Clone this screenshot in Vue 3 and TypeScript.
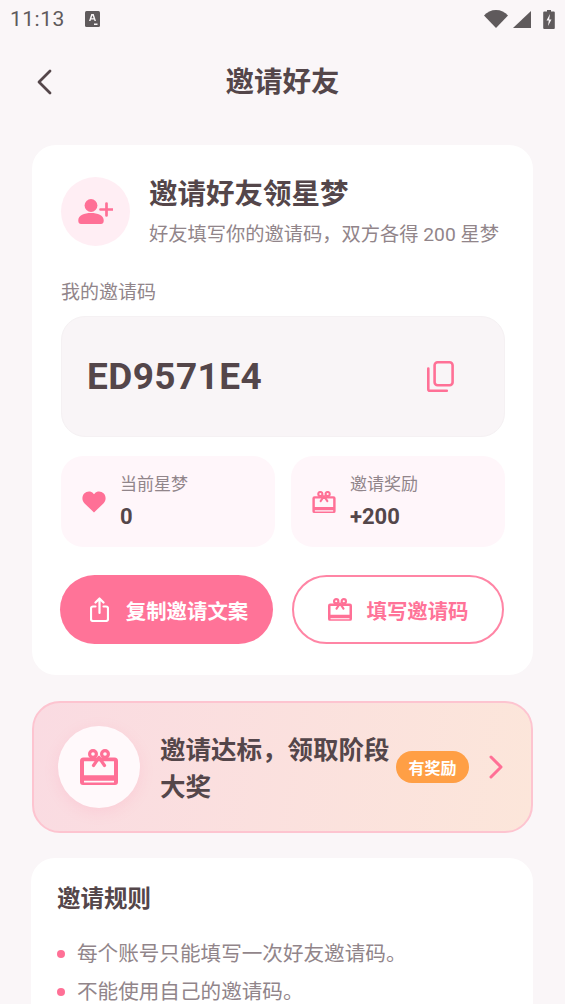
<script setup lang="ts">
const rules: string[] = ['每个账号只能填写一次好友邀请码。', '不能使用自己的邀请码。']
const giftBody =
  'M3.500 8.500h31a3.500 3.500 0 0 1 3.500 3.500V33a3 3 0 0 1-3 3H3a3 3 0 0 1-3-3V12a3.500 3.500 0 0 1 3.500-3.500zM4 12.300v14h30v-14zM4 31.700v1.300a.5.500 0 0 0 .5.500h29a.5.500 0 0 0 .5-.5v-1.300z'
</script>

<template>
  <div class="page">
    <div class="status">
      <span class="time">11:13</span>
      <svg class="a-icon" viewBox="0 0 15 16"><rect width="15" height="16" rx="1.500" fill="#5f5a5c"/><path fill="#faf6f8" d="M6.300 3h2.400l2.300 7H9.500L9 8.500H6L5.500 10H4zM6.400 7.300h2.200L7.500 4.200zM9 12.500h3.500V14H9z"/></svg>
      <span class="grow"></span>
      <svg class="wifi" viewBox="0 0 24 18"><path fill="#5f5a5c" d="M0 5.500C3 2 7.300 0 12 0s9 2 12 5.500L12 18z"/></svg>
      <svg class="signal" viewBox="0 0 18 17"><path fill="#5f5a5c" d="M18 0v17H0z"/></svg>
      <svg class="batt" viewBox="0 0 12 19"><path fill="#5f5a5c" d="M4 0h4v1.500h2.800a1 1 0 0 1 1 1V18a1 1 0 0 1-1 1H1.200a1 1 0 0 1-1-1V2.500a1 1 0 0 1 1-1H4z"/><path fill="#faf6f8" d="M7 4 3.500 10.500h2.300L5 16l3.500-6.500H6.200z"/></svg>
    </div>

    <div class="nav">
      <svg class="back" viewBox="0 0 16 26"><path d="M14 2 3 13l11 11" fill="none" stroke="#54464a" stroke-width="2.800" stroke-linecap="round" stroke-linejoin="round"/></svg>
      <span class="nav-title">邀请好友</span>
    </div>

    <section class="card main">
      <div class="head">
        <div class="avatar">
          <svg viewBox="0 0 35 25" class="avatar-svg"><circle cx="13" cy="6.500" r="6.400" fill="#ff7096"/><path fill="#ff7096" d="M.3 21c0-4.500 6-7 12.700-7s12.700 2.500 12.700 7v1c0 2-1.200 3-2.700 3H3c-1.500 0-2.700-1-2.700-3z"/><path d="M28.500 4.500v12M22.500 10.500h12" stroke="#ff7096" stroke-width="2.700" fill="none" stroke-linecap="round"/></svg>
        </div>
        <div class="head-text">
          <div class="head-title">邀请好友领星梦</div>
          <div class="head-sub">好友填写你的邀请码，双方各得 200 星梦</div>
        </div>
      </div>

      <div class="label">我的邀请码</div>
      <div class="code-box">
        <span class="code">ED9571E4</span>
        <svg class="copy" viewBox="0 0 27 31"><rect x="7.600" y="1.300" width="18" height="23" rx="3" fill="none" stroke="#ff7096" stroke-width="2.600"/><path d="M1.300 7.500v20.700a1.500 1.500 0 0 0 1.500 1.500h17" fill="none" stroke="#ff7096" stroke-width="2.600" stroke-linecap="round"/></svg>
      </div>

      <div class="stats">
        <div class="stat">
          <svg class="stat-icon" viewBox="0 0 24 22"><path fill="#ff7096" d="M12 21.500 2.600 12.400C-.2 9.700-.3 5.300 2.200 2.600 4.800-.1 9-.1 11.300 2.400l.7.800.7-.8c2.300-2.500 6.500-2.500 9.100.2 2.500 2.700 2.400 7.100-.4 9.800z"/></svg>
          <div>
            <div class="stat-label">当前星梦</div>
            <div class="stat-value">0</div>
          </div>
        </div>
        <div class="stat">
          <svg class="stat-icon" viewBox="0 0 38 36"><path fill="#ff7096" fill-rule="evenodd" :d="giftBody"/><g fill="none" stroke="#ff7096" stroke-width="3.400"><circle cx="13" cy="5" r="3.400"/><circle cx="25" cy="5" r="3.400"/><path d="M19 8.500l-5.500 8M19 8.500l5.500 8" stroke-linecap="round"/></g></svg>
          <div>
            <div class="stat-label">邀请奖励</div>
            <div class="stat-value">+200</div>
          </div>
        </div>
      </div>

      <div class="actions">
        <button class="btn primary">
          <svg class="share" viewBox="0 0 19 25"><path d="M5.500 9.500H3a2 2 0 0 0-2 2V22a2 2 0 0 0 2 2h13a2 2 0 0 0 2-2V11.500a2 2 0 0 0-2-2h-2.500M9.500 16V2M5.500 5.500l4-4 4 4" fill="none" stroke="#fff" stroke-width="2.200" stroke-linecap="round" stroke-linejoin="round"/></svg>
          <span>复制邀请文案</span>
        </button>
        <button class="btn outline">
          <svg class="btn-gift" viewBox="0 0 38 36"><path fill="#ff7096" fill-rule="evenodd" :d="giftBody"/><g fill="none" stroke="#ff7096" stroke-width="3.400"><circle cx="13" cy="5" r="3.400"/><circle cx="25" cy="5" r="3.400"/><path d="M19 8.500l-5.500 8M19 8.500l5.500 8" stroke-linecap="round"/></g></svg>
          <span>填写邀请码</span>
        </button>
      </div>
    </section>

    <section class="banner">
      <div class="banner-circle">
        <svg class="banner-gift" viewBox="0 0 38 36"><path fill="#ff7096" fill-rule="evenodd" :d="giftBody"/><g fill="none" stroke="#ff7096" stroke-width="3.200"><circle cx="13" cy="5" r="3.400"/><circle cx="25" cy="5" r="3.400"/><path d="M19 8.500l-5.500 8M19 8.500l5.500 8" stroke-linecap="round"/></g></svg>
      </div>
      <div class="banner-text">邀请达标，领取阶段大奖</div>
      <span class="badge">有奖励</span>
      <svg class="chev" viewBox="0 0 14 24"><path d="M2 2l10 10L2 22" fill="none" stroke="#ff7096" stroke-width="3" stroke-linecap="round" stroke-linejoin="round"/></svg>
    </section>

    <section class="card rules">
      <div class="rules-title">邀请规则</div>
      <ul class="rule-list">
        <li v-for="r in rules" :key="r" class="rule"><i class="dot"></i>{{ r }}</li>
      </ul>
    </section>
  </div>
</template>

<style scoped>
.page {
  width: 565px;
  height: 1004px;
  overflow: hidden;
  background: #faf6f8;
  font-family: Roboto, "Noto Sans CJK SC", sans-serif;
  color: #54464a;
  box-sizing: border-box;
}
.status {
  height: 38px;
  display: flex;
  align-items: center;
  padding: 0 10px;
  color: #5f5a5c;
}
.time { font-size: 21px; letter-spacing: 0.5px; line-height: 38px; }
.a-icon { width: 15px; height: 16px; margin-left: 20px; }
.grow { flex: 1; }
.wifi { width: 24px; height: 18px; margin-right: 5px; }
.signal { width: 18px; height: 17px; margin-right: 12px; }
.batt { width: 12px; height: 19px; }
.nav {
  height: 90px;
  position: relative;
  display: flex;
  align-items: center;
  justify-content: center;
}
.back { position: absolute; left: 36px; top: 31px; width: 16px; height: 26px; }
.nav-title { font-size: 28.500px; font-weight: 700; line-height: 90px; }
.card {
  background: #fff;
  border-radius: 24px;
  margin: 0 32px;
}
.main { margin-top: 17px; height: 530px; padding: 32px 28px 0 29px; box-sizing: border-box; }
.head { display: flex; align-items: center; gap: 19px; }
.avatar {
  width: 69px;
  height: 69px;
  border-radius: 50%;
  background: #ffeef4;
  display: flex;
  align-items: center;
  justify-content: center;
  flex: none;
}
.avatar-svg { width: 35px; height: 25px; }
.head-text { margin: -2px 0; }
.head-title { font-size: 28.500px; font-weight: 700; line-height: 40px; }
.head-sub { font-size: 19.25px; line-height: 26px; color: #91858a; margin-top: 7px; white-space: nowrap; }
.label { font-size: 19px; line-height: 26px; color: #91858a; margin-top: 34px; }
.code-box {
  height: 121px;
  margin-top: 10px;
  border-radius: 24px;
  background: #f9f5f7;
  border: 1px solid #f5f1f3;
  box-sizing: border-box;
  display: flex;
  align-items: center;
  justify-content: space-between;
  padding: 0 50px 0 25px;
}
.code { font-size: 37px; font-weight: 700; letter-spacing: 0.4px; }
.copy { width: 27px; height: 31px; }
.stats { display: flex; gap: 16px; margin-top: 19px; }
.stat {
  flex: 1;
  height: 91px;
  border-radius: 22px;
  background: #fff6fa;
  display: flex;
  align-items: center;
  gap: 15px;
  padding-left: 21px;
}
.stat-icon { width: 24px; height: 22px; flex: none; }
.stat-label { font-size: 17px; line-height: 24px; color: #91858a; margin-left: -1px; }
.stat-value { font-size: 22px; font-weight: 700; line-height: 28px; margin-top: 7px; margin-left: -1px; }
.actions { display: flex; gap: 19px; margin-top: 28px; margin-left: -1px; }
.btn {
  height: 69px;
  border-radius: 35px;
  font: inherit;
  font-size: 20.4px;
  font-weight: 700;
  display: flex;
  align-items: center;
  justify-content: center;
  box-sizing: border-box;
  padding: 0;
  flex: none;
}
.primary { width: 213px; background: #ff7398; color: #fff; border: none; gap: 17px; padding-left: 5px; }
.outline { width: 212px; background: #fff; color: #ff7398; border: 2px solid #ff85a5; gap: 15px; }
.share { width: 19px; height: 25px; }
.btn-gift { width: 24px; height: 23px; }
.banner {
  margin: 26px 32px 0;
  height: 132px;
  border-radius: 28px;
  border: 2px solid #fdc4d0;
  background: linear-gradient(100deg, #fadbe2, #fce6da);
  box-sizing: border-box;
  display: flex;
  align-items: center;
  padding: 0 27px 0 24px;
}
.banner-circle {
  width: 82px;
  height: 82px;
  border-radius: 50%;
  background: #fff9fb;
  box-shadow: 0 4px 14px rgba(255, 140, 170, 0.18);
  display: flex;
  align-items: center;
  justify-content: center;
  flex: none;
}
.banner-gift { width: 38px; height: 36px; }
.banner-text {
  width: 236px;
  margin-left: 20px;
  font-size: 25.500px;
  font-weight: 700;
  line-height: 37px;
  flex: none;
  padding-top: 4px;
}
.badge {
  width: 73px;
  height: 32px;
  border-radius: 16px;
  background: #ff9f45;
  color: #fff;
  font-size: 16px;
  font-weight: 700;
  display: flex;
  align-items: center;
  justify-content: center;
  flex: none;
}
.chev { width: 14px; height: 24px; margin-left: 20px; flex: none; }
.rules { margin: 25px 32px 0 31px; height: 200px; padding: 25px 26px; box-sizing: border-box; }
.rules-title { font-size: 23.500px; font-weight: 700; line-height: 32px; }
.rule-list { list-style: none; margin: 20px 0 0; padding: 0; }
.rule {
  display: flex;
  align-items: center;
  font-size: 20.600px;
  line-height: 38px;
  color: #91858a;
}
.dot {
  width: 8px;
  height: 8px;
  border-radius: 50%;
  background: #ff7096;
  margin-right: 12px;
  flex: none;
}
</style>

<style>
html, body { margin: 0; background: #faf6f8; }
</style>
